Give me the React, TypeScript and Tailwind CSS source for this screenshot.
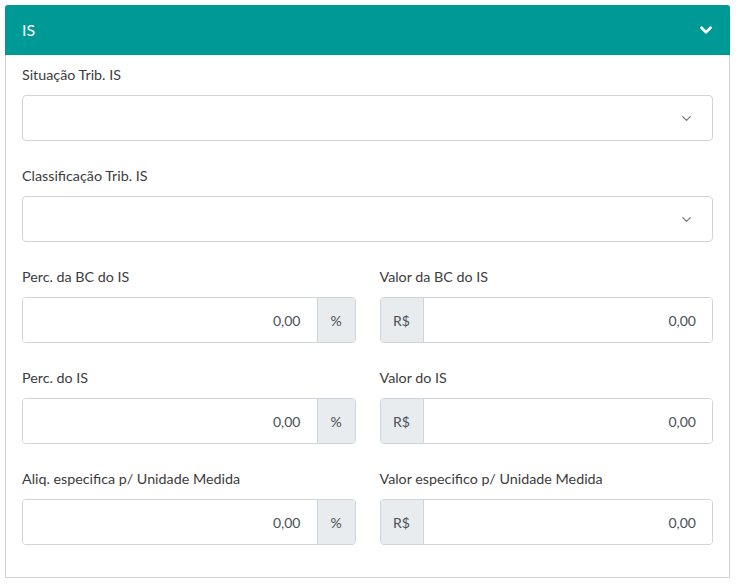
import { ChevronDown } from "lucide-react";

function SelectField({ label }: { label: string }) {
  return (
    <div className="mb-[25px]">
      <label className="block h-5 leading-5 mb-[10px] text-[14.3px] text-[#3c3c3c]">{label}</label>
      <div className="h-[46px] border border-[#ced4da] rounded-[4px] bg-white flex items-center justify-end pr-[18px]">
        <ChevronDown className="w-[15px] h-[15px] text-[#777]" strokeWidth={2} />
      </div>
    </div>
  );
}

function PercentField({ label }: { label: string }) {
  return (
    <div>
      <label className="block h-5 leading-5 mb-[10px] text-[14.3px] text-[#3c3c3c]">{label}</label>
      <div className="h-[46px] flex border border-[#ced4da] rounded-[4px] overflow-hidden">
        <div className="flex-1 flex items-center justify-end pr-4 text-[14px] text-[#495057] bg-white">0,00</div>
        <div className="w-[38px] flex items-center justify-center border-l border-[#ced4da] bg-[#e9ecef] text-[14px] text-[#495057]">%</div>
      </div>
    </div>
  );
}

function MoneyField({ label }: { label: string }) {
  return (
    <div>
      <label className="block h-5 leading-5 mb-[10px] text-[14.3px] text-[#3c3c3c]">{label}</label>
      <div className="h-[46px] flex border border-[#ced4da] rounded-[4px] overflow-hidden">
        <div className="w-[43px] flex items-center justify-center border-r border-[#ced4da] bg-[#e9ecef] text-[14px] text-[#495057]">R$</div>
        <div className="flex-1 flex items-center justify-end pr-4 text-[14px] text-[#495057] bg-white">0,00</div>
      </div>
    </div>
  );
}

export default function App() {
  return (
    <div className="pl-[5px] pt-[5px]" style={{ fontFamily: "Lato, 'Open Sans', sans-serif" }}>
      <div className="w-[725px] border border-[#d4d4d4] border-t-0 bg-white rounded-t-[3px]">
        {/* Header */}
        <div className="h-[50px] -mx-px bg-[#009a96] rounded-t-[3px] flex items-center justify-between pl-[17px] pr-[15px]">
          <span className="text-white text-[16px]">IS</span>
          <ChevronDown className="w-[18px] h-[18px] text-white" strokeWidth={3.5} />
        </div>

        {/* Body */}
        <div className="px-4 pt-[10px] pb-[7px]">
          <SelectField label="Situação Trib. IS" />
          <SelectField label="Classificação Trib. IS" />
          <div className="grid grid-cols-2 gap-x-[24px] gap-y-[25px] mb-[25px]">
            <PercentField label="Perc. da BC do IS" />
            <MoneyField label="Valor da BC do IS" />
            <PercentField label="Perc. do IS" />
            <MoneyField label="Valor do IS" />
            <PercentField label="Aliq. especifica p/ Unidade Medida" />
            <MoneyField label="Valor especifico p/ Unidade Medida" />
          </div>
        </div>
      </div>
    </div>
  );
}
